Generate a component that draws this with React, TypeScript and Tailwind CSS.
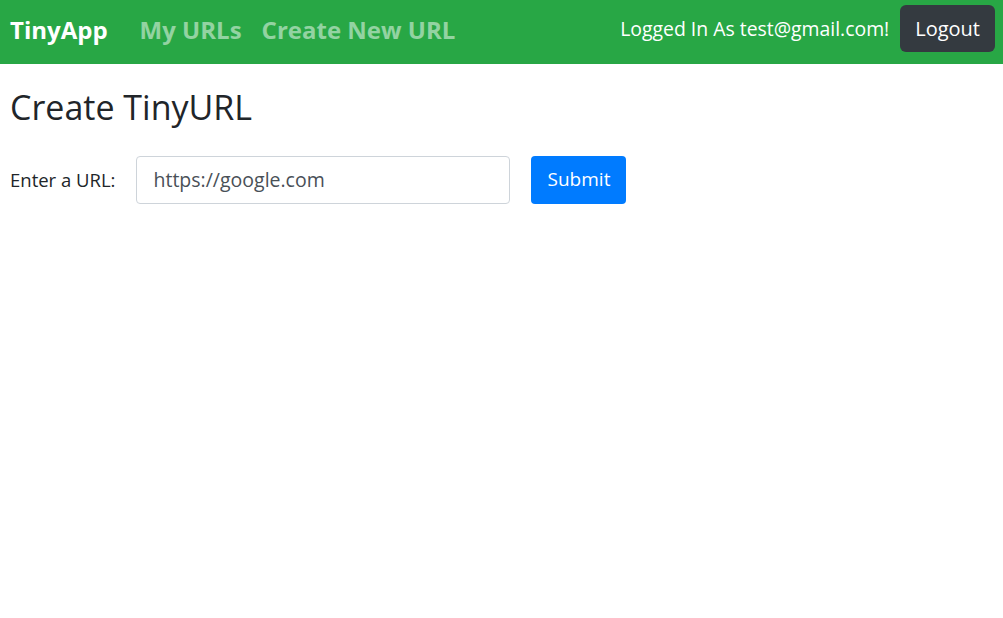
export default function App() {
  return (
    <div className="min-h-screen bg-white font-['Open_Sans',sans-serif] text-[#212529]">
      {/* Navbar */}
      <nav className="flex h-16 items-start justify-between bg-[#28a745] pl-[10px] pr-2 pt-[5px]">
        <div className="flex h-[50px] items-center">
          <a className="mr-8 text-[24px] font-bold text-white">TinyApp</a>
          <a className="mr-5 text-[24px] font-bold text-white/50">My URLs</a>
          <a className="text-[24px] font-bold text-white/50">Create New URL</a>
        </div>
        <div className="flex items-center gap-[11px]">
          <span className="text-[19.4px] text-white">Logged In As test@gmail.com!</span>
          <button className="h-[47px] rounded-md bg-[#343a40] px-[15px] text-[20px] text-white">
            Logout
          </button>
        </div>
      </nav>

      <main className="px-[10px]">
        <h2 className="mt-[22px] text-[34px] font-medium leading-tight">Create TinyURL</h2>
        <form className="mt-[27px] flex items-center">
          <label className="mr-[21px] text-[18.5px]">Enter a URL:</label>
          <input
            className="h-12 w-[374px] rounded border border-[#ced4da] px-4 text-[19.5px] text-[#495057] placeholder:text-[#495057]"
            placeholder="https://google.com"
          />
          <button className="ml-[21px] h-12 w-[95px] rounded bg-[#007bff] text-[19px] text-white">Submit</button>
        </form>
      </main>
    </div>
  );
}
